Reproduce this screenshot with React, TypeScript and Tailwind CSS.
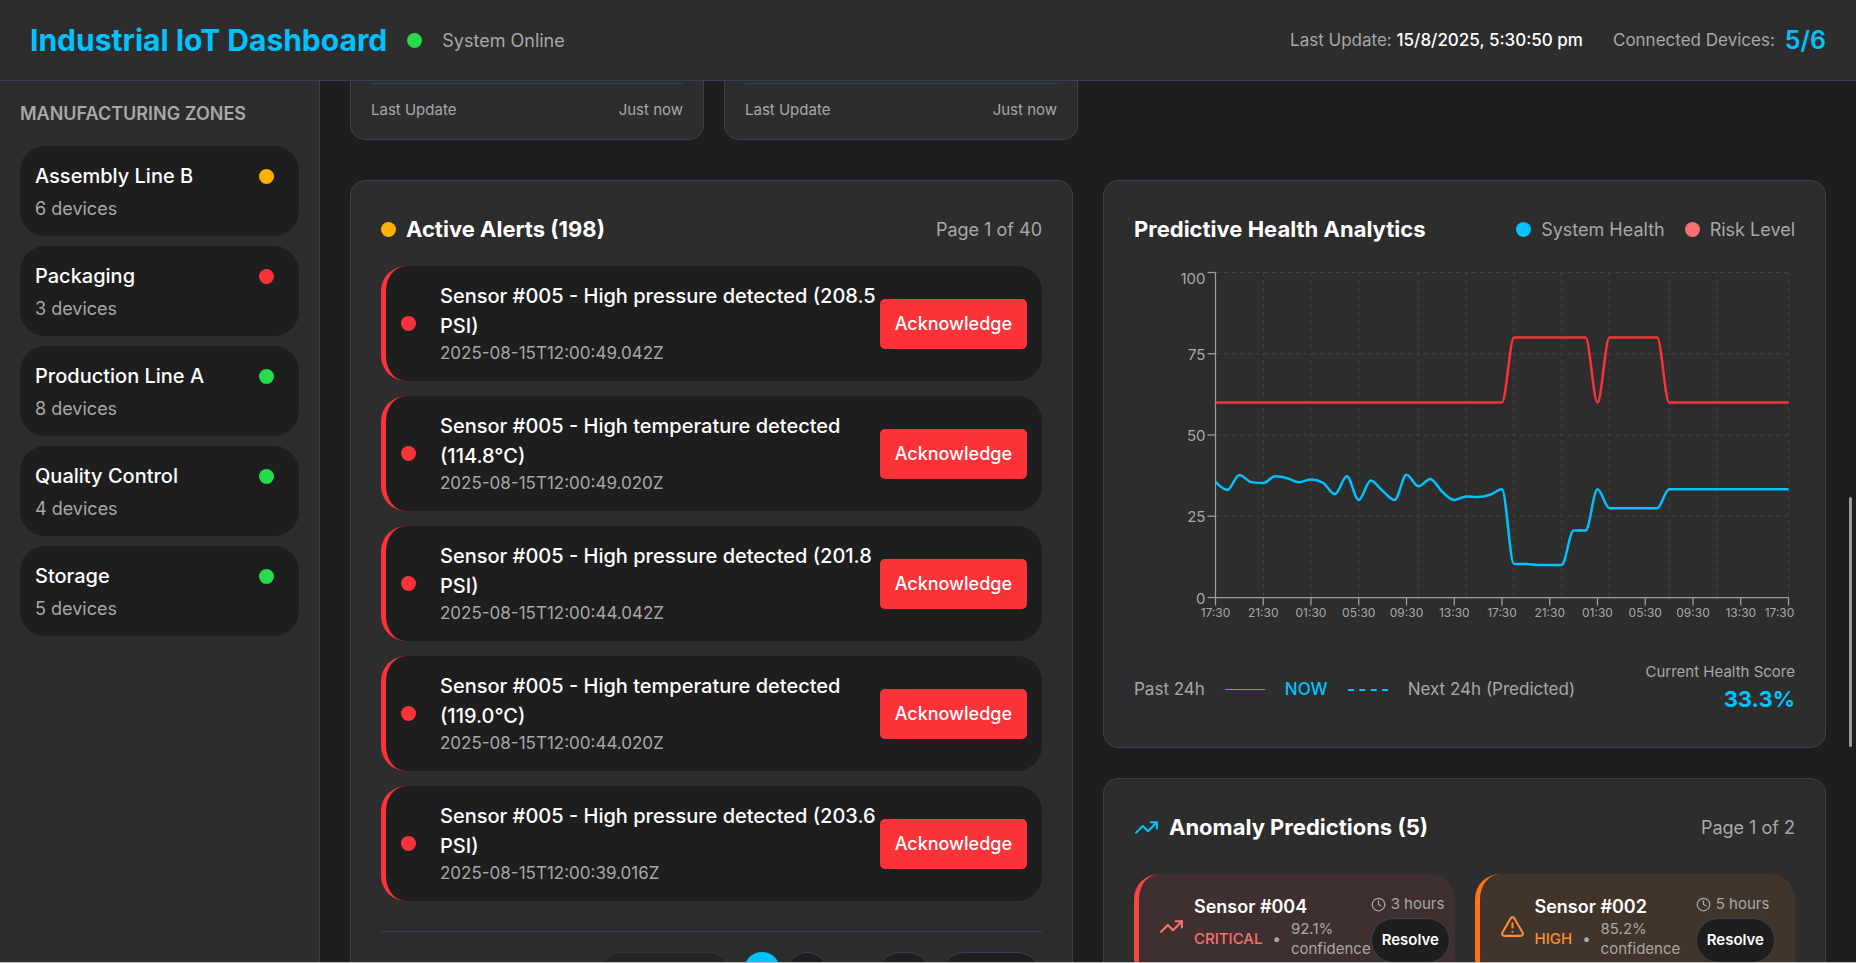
import React from "react";
import { AlertTriangle, Clock, TrendingUp } from "lucide-react";

const ZONES = [
  { name: "Assembly Line B", devices: 6, dot: "bg-[#ffb000]" },
  { name: "Packaging", devices: 3, dot: "bg-[#fb3339]" },
  { name: "Production Line A", devices: 8, dot: "bg-[#28db48]" },
  { name: "Quality Control", devices: 4, dot: "bg-[#28db48]" },
  { name: "Storage", devices: 5, dot: "bg-[#28db48]" },
];

const ALERTS = [
  { text: "Sensor #005 - High pressure detected (208.5 PSI)", time: "2025-08-15T12:00:49.042Z" },
  { text: "Sensor #005 - High temperature detected (114.8°C)", time: "2025-08-15T12:00:49.020Z" },
  { text: "Sensor #005 - High pressure detected (201.8 PSI)", time: "2025-08-15T12:00:44.042Z" },
  { text: "Sensor #005 - High temperature detected (119.0°C)", time: "2025-08-15T12:00:44.020Z" },
  { text: "Sensor #005 - High pressure detected (203.6 PSI)", time: "2025-08-15T12:00:39.016Z" },
];

const HEALTH = [
  35.6, 33.1, 37.7, 35.5, 35.2, 37.3, 36.7, 35.5, 36.3, 35.3, 31.8, 37.3, 30, 36, 32.8, 30, 37.8,
  34.2, 36.5, 32.5, 30, 31.1, 30.9, 31.6, 33.3, 10.3, 10.3, 10, 10, 10, 20.6, 20.6, 33.3, 27.5,
  27.5, 27.5, 27.5, 27.5, 33.3, 33.3, 33.3, 33.3, 33.3, 33.3, 33.3, 33.3, 33.3, 33.3, 33.3,
];
const RISK = HEALTH.map((_, i) => ((i >= 25 && i <= 31) || (i >= 33 && i <= 37) ? 80 : 60));

const LEFT = 81.5;
const RIGHT = 654.5;
const TOP = 5.5;
const BOTTOM = 330.5;
const px = (i: number) => LEFT + (i * (RIGHT - LEFT)) / 48;
const py = (v: number) => BOTTOM - (v * (BOTTOM - TOP)) / 100;

/* Monotone cubic interpolation, so that flat runs stay flat between steps. */
function monotone(values: number[]): string {
  const n = values.length;
  const x = values.map((_, i) => px(i));
  const y = values.map(py);
  const h = x[1] - x[0];
  const s = values.slice(1).map((_, i) => (y[i + 1] - y[i]) / h);
  const t: number[] = new Array(n).fill(0);
  for (let i = 1; i < n - 1; i++) {
    const a = s[i - 1];
    const b = s[i];
    const p = (a + b) / 2;
    t[i] = (Math.sign(a) + Math.sign(b)) * Math.min(Math.abs(a), Math.abs(b), 0.5 * Math.abs(p)) || 0;
  }
  t[0] = (3 * s[0] - t[1]) / 2;
  t[n - 1] = (3 * s[n - 2] - t[n - 2]) / 2;
  let d = `M${x[0]},${y[0]}`;
  for (let i = 0; i < n - 1; i++) {
    const k = h / 3;
    d += `C${x[i] + k},${y[i] + k * t[i]},${x[i + 1] - k},${y[i + 1] - k * t[i + 1]},${x[i + 1]},${y[i + 1]}`;
  }
  return d;
}

const GRID = [4, 8, 12, 17, 21, 25, 29, 33, 38, 42, 48];
const HOURS = ["17:30", "21:30", "01:30", "05:30", "09:30", "13:30"];

function HealthChart() {
  return (
    <svg viewBox="0 0 661 375" className="block w-full" role="img" aria-label="System health and risk level">
      <g stroke="#444444" strokeWidth="1" strokeDasharray="4 4" fill="none">
        {[25, 50, 75, 100].map((v) => (
          <line key={v} x1={LEFT} x2={RIGHT} y1={py(v)} y2={py(v)} />
        ))}
        {GRID.map((i) => (
          <line key={i} x1={px(i)} x2={px(i)} y1={TOP} y2={BOTTOM} />
        ))}
      </g>
      <g stroke="#a0a0a0" strokeWidth="1.25">
        <line x1={LEFT} x2={LEFT} y1={TOP} y2={BOTTOM} />
        <line x1={LEFT} x2={RIGHT} y1={BOTTOM} y2={BOTTOM} />
        {[0, 25, 50, 75, 100].map((v) => (
          <line key={v} x1={LEFT - 8} x2={LEFT} y1={py(v)} y2={py(v)} />
        ))}
        {Array.from({ length: 13 }, (_, k) => (
          <line key={k} x1={px(k * 4)} x2={px(k * 4)} y1={BOTTOM} y2={BOTTOM + 8} />
        ))}
      </g>
      <g fill="#a8a8a8" fontSize="15" textAnchor="end">
        {[0, 25, 50, 75, 100].map((v) => (
          <text key={v} x={LEFT - 10} y={py(v) + (v === 100 ? 11 : 6)}>
            {v}
          </text>
        ))}
      </g>
      <g fill="#a8a8a8" fontSize="12" textAnchor="middle">
        {Array.from({ length: 13 }, (_, k) => (
          <text key={k} x={k === 12 ? RIGHT - 9 : px(k * 4)} y={BOTTOM + 19}>
            {HOURS[k % 6]}
          </text>
        ))}
      </g>
      <path d={monotone(HEALTH)} fill="none" stroke="#00c2ff" strokeWidth="2.5" />
      <path d={monotone(RISK)} fill="none" stroke="#fb3339" strokeWidth="2.5" />
    </svg>
  );
}

function Dot({ color }: { color: string }) {
  return <span className={`size-[15px] shrink-0 rounded-full ${color}`} />;
}

function DeviceCard() {
  return (
    <article className="rounded-b-[15px] border-x border-b border-[#364153] bg-[#2d2d2d] px-5 pt-0.5 pb-[18px]">
      <div className="flex justify-between border-t border-[#364153] pt-[15px] text-[15px] leading-[22px] text-[#a8a8a8]">
        <span>Last Update</span>
        <span>Just now</span>
      </div>
    </article>
  );
}

const CARD = "rounded-[15px] border border-[#364153] bg-[#2d2d2d] p-[30px]";
const CARD_HEAD = "flex h-9 items-center justify-between";
const PAGE_BUTTON = "h-[50px] rounded-[25px] border border-[#364153] bg-[#1e1e1e]";

const PREDICTIONS = [
  {
    sensor: "Sensor #004",
    level: "CRITICAL",
    confidence: "92.1% confidence",
    time: "3 hours",
    Icon: TrendingUp,
    box: "border-[#f84444] bg-[#402f2f]",
    tint: "text-[#f87171]",
  },
  {
    sensor: "Sensor #002",
    level: "HIGH",
    confidence: "85.2% confidence",
    time: "5 hours",
    Icon: AlertTriangle,
    box: "border-[#ff7414] bg-[#41342b]",
    tint: "text-[#ff8c33]",
  },
];

export default function App() {
  return (
    <div className="relative flex h-screen flex-col overflow-hidden border-b border-[#bdbdbd] bg-[#1e1e1e] font-['Inter',sans-serif] text-white">
      <header className="flex h-[81px] shrink-0 items-center justify-between border-b border-[#364153] bg-[#2d2d2d] px-[30px]">
        <div className="flex items-center gap-5">
          <h1 className="text-[30px] leading-10 font-bold text-[#00c2ff]">Industrial IoT Dashboard</h1>
          <div className="flex items-center gap-5">
            <Dot color="bg-[#28db48]" />
            <span className="text-[18px] leading-[25px] text-[#a8a8a8]">System Online</span>
          </div>
        </div>
        <div className="flex items-center gap-[30px] text-[17px] leading-[25px] text-[#a8a8a8]">
          <p>
            Last Update: <span className="font-medium text-white">15/8/2025, 5:30:50 pm</span>
          </p>
          <p className="flex items-center gap-2.5">
            Connected Devices: <span className="text-[25px] leading-[35px] font-semibold text-[#00c2ff]">5/6</span>
          </p>
        </div>
      </header>

      <div className="flex min-h-0 flex-1">
        <aside className="w-80 shrink-0 border-r border-[#364153] bg-[#2d2d2d] p-5">
          <h2 className="text-[18px] leading-[25px] font-semibold text-[#a8a8a8]">MANUFACTURING ZONES</h2>
          <ul className="mt-5 flex flex-col gap-2.5">
            {ZONES.map((z) => (
              <li key={z.name}>
                <button type="button" className="block w-full rounded-[25px] bg-[#1e1e1e] p-[15px] text-left">
                  <span className="flex items-center justify-between pr-2.5">
                    <span className="text-[20px] leading-[30px] font-medium">{z.name}</span>
                    <Dot color={z.dot} />
                  </span>
                  <span className="mt-[5px] block text-[18px] leading-[25px] text-[#a8a8a8]">{z.devices} devices</span>
                </button>
              </li>
            ))}
          </ul>
        </aside>

        <main className="min-w-0 flex-1 overflow-hidden px-[30px]">
          <div className="grid grid-cols-4 gap-5">
            <DeviceCard />
            <DeviceCard />
          </div>

          <div className="mt-10 grid grid-cols-2 gap-[30px]">
            <section className={CARD}>
              <div className={CARD_HEAD}>
                <h2 className="flex items-center gap-2.5 text-[22px] font-bold">
                  <Dot color="bg-[#ffb000]" />
                  Active Alerts (198)
                </h2>
                <span className="text-[18px] text-[#a8a8a8]">Page 1 of 40</span>
              </div>
              <ul className="mt-[19px] flex flex-col gap-[15px]">
                {ALERTS.map((a, i) => (
                  <li
                    key={i}
                    className="flex items-center rounded-[25px] border-l-[5px] border-[#fb3339] bg-[#1e1e1e] p-[15px]"
                  >
                    <Dot color="bg-[#fb3339]" />
                    <div className="ml-6 min-w-0 flex-1">
                      <p className="text-[20px] leading-[30px] font-medium">{a.text}</p>
                      <p className="text-[17px] leading-[25px] text-[#a8a8a8]">{a.time}</p>
                    </div>
                    <button
                      type="button"
                      className="h-[50px] shrink-0 rounded-[5px] bg-[#fb3339] px-[15px] text-[18px] font-medium"
                    >
                      Acknowledge
                    </button>
                  </li>
                ))}
              </ul>
              <nav
                aria-label="Alert pages"
                className="mt-[30px] flex items-center justify-end border-t border-[#364153] pt-5 text-[18px] leading-none font-medium"
              >
                <button type="button" disabled className={`mr-[11px] w-[136px] opacity-50 ${PAGE_BUTTON}`}>
                  Previous
                </button>
                <button type="button" className="mr-1.5 h-[50px] w-9 rounded-[25px] bg-[#00c2ff]">
                  1
                </button>
                <button type="button" className={`w-[42px] ${PAGE_BUTTON}`}>
                  2
                </button>
                <span className="w-12 text-center text-[#a8a8a8]">...</span>
                <button type="button" className={`mr-2 w-14 ${PAGE_BUTTON}`}>
                  40
                </button>
                <button type="button" className={`w-[102px] ${PAGE_BUTTON}`}>
                  Next
                </button>
              </nav>
            </section>

            <div className="flex flex-col gap-[30px]">
              <section className={CARD}>
                <div className={CARD_HEAD}>
                  <h2 className="text-[22px] font-bold">Predictive Health Analytics</h2>
                  <div className="flex gap-5 text-[18px] text-[#a8a8a8]">
                    <span className="flex items-center gap-2.5">
                      <Dot color="bg-[#00c2ff]" />
                      System Health
                    </span>
                    <span className="flex items-center gap-2.5">
                      <Dot color="bg-[#f87171]" />
                      Risk Level
                    </span>
                  </div>
                </div>
                <div className="mt-5">
                  <HealthChart />
                </div>
                <div className="mt-5 flex items-center justify-between text-[17px] text-[#a8a8a8]">
                  <div className="flex items-center gap-5">
                    <span>Past 24h</span>
                    <span className="w-10 border-t border-[#00c2ff]" />
                    <span className="font-medium text-[#00c2ff]">NOW</span>
                    <span className="w-10 border-t-2 border-dashed border-[#00c2ff]" />
                    <span>Next 24h (Predicted)</span>
                  </div>
                  <div className="text-right">
                    <p className="text-[15px] leading-5">Current Health Score</p>
                    <p className="text-[22px] leading-[35px] font-bold text-[#00c2ff]">33.3%</p>
                  </div>
                </div>
              </section>

              <section className={CARD}>
                <div className={CARD_HEAD}>
                  <h2 className="flex items-center gap-2.5 text-[22px] font-bold">
                    <TrendingUp size={25} className="text-[#00c2ff]" />
                    Anomaly Predictions (5)
                  </h2>
                  <span className="text-[18px] text-[#a8a8a8]">Page 1 of 2</span>
                </div>
                <div className="mt-[29px] grid grid-cols-2 gap-5">
                  {PREDICTIONS.map((p) => (
                    <article
                      key={p.sensor}
                      className={`flex items-start justify-between rounded-[25px] border-l-[5px] p-5 ${p.box}`}
                    >
                      <div className="flex items-center gap-2.5">
                        <p.Icon size={25} className={`shrink-0 ${p.tint}`} />
                        <div>
                          <h3 className="text-[18px] leading-[25px] font-semibold">{p.sensor}</h3>
                          <div className="flex items-center gap-2.5 text-[15px] leading-5 text-[#a8a8a8]">
                            <span className={`font-medium ${p.tint}`}>{p.level}</span>
                            <span>•</span>
                            <span>{p.confidence}</span>
                          </div>
                        </div>
                      </div>
                      <div className="shrink-0">
                        <p className="flex items-center gap-[5px] text-[15px] leading-5 text-[#a8a8a8]">
                          <Clock size={15} />
                          {p.time}
                        </p>
                        <button
                          type="button"
                          className="mt-1 h-[45px] rounded-full border border-[#364153] bg-[#1e1e1e] px-2.5 text-[15px] font-semibold"
                        >
                          Resolve
                        </button>
                      </div>
                    </article>
                  ))}
                </div>
              </section>
            </div>
          </div>
        </main>
      </div>
      <div className="absolute top-[497px] right-1 h-[250px] w-[3px] rounded-full bg-[#9b9b9b]" />
    </div>
  );
}
